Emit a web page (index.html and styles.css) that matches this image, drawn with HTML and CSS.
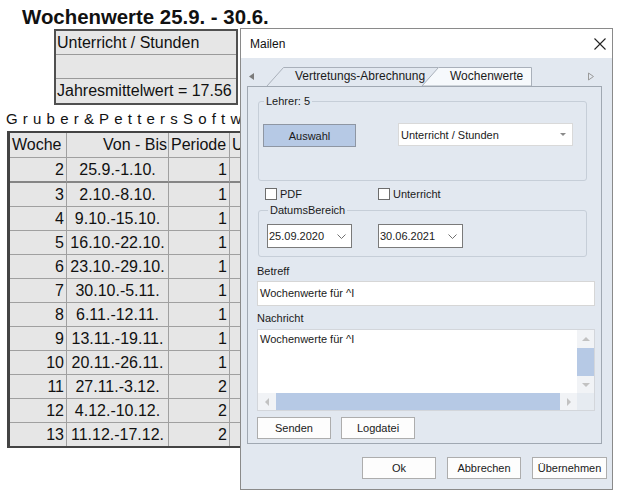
FILE: index.html
```html
<!DOCTYPE html>
<html lang="de">
<head>
<meta charset="utf-8">
<title>Wochenwerte</title>
<link rel="stylesheet" href="styles.css">
</head>
<body>
<div class="report">
  <h1 class="title">Wochenwerte 25.9. - 30.6.</h1>
  <div class="summary">
    <div class="summary-row">Unterricht / Stunden</div>
    <div class="summary-row"></div>
    <div class="summary-row">Jahresmittelwert = 17.56</div>
  </div>
  <div class="brand">Gruber&amp;PettersSoftware</div>
  <table class="weeks">
    <thead>
      <tr>
        <th class="c-week">Woche</th>
        <th class="c-range">Von - Bis</th>
        <th class="c-period">Periode</th>
        <th class="c-hours">U</th>
      </tr>
    </thead>
    <tbody>
      <tr class="first"><td class="num">2</td><td class="range">25.9.-1.10.</td><td class="num">1</td><td></td></tr>
      <tr><td class="num">3</td><td class="range">2.10.-8.10.</td><td class="num">1</td><td></td></tr>
      <tr><td class="num">4</td><td class="range">9.10.-15.10.</td><td class="num">1</td><td></td></tr>
      <tr><td class="num">5</td><td class="range">16.10.-22.10.</td><td class="num">1</td><td></td></tr>
      <tr><td class="num">6</td><td class="range">23.10.-29.10.</td><td class="num">1</td><td></td></tr>
      <tr><td class="num">7</td><td class="range">30.10.-5.11.</td><td class="num">1</td><td></td></tr>
      <tr><td class="num">8</td><td class="range">6.11.-12.11.</td><td class="num">1</td><td></td></tr>
      <tr><td class="num">9</td><td class="range">13.11.-19.11.</td><td class="num">1</td><td></td></tr>
      <tr><td class="num">10</td><td class="range">20.11.-26.11.</td><td class="num">1</td><td></td></tr>
      <tr><td class="num">11</td><td class="range">27.11.-3.12.</td><td class="num">2</td><td></td></tr>
      <tr><td class="num">12</td><td class="range">4.12.-10.12.</td><td class="num">2</td><td></td></tr>
      <tr><td class="num">13</td><td class="range">11.12.-17.12.</td><td class="num">2</td><td></td></tr>
    </tbody>
  </table>
</div>

<div class="dialog">
  <div class="titlebar">
    <span>Mailen</span>
    <svg class="close" width="12" height="12" viewBox="0 0 12 12"><path d="M0.5 0.5L11.5 11.5M11.5 0.5L0.5 11.5" stroke="#222" stroke-width="1.1" fill="none"/></svg>
  </div>
  <div class="tabs">
    <svg class="tab-shapes" width="371" height="28" viewBox="0 0 371 28">
      <polygon points="8,18.5 13,15 13,22" fill="#7b7b7b"/>
      <polygon points="347.5,15 352.5,18.5 347.5,22" fill="none" stroke="#9a9a9a"/>
      <path d="M26 28 L42.5 9.5 L197 9.5" fill="#e2e8f0" stroke="#a9b0ba"/>
      <path d="M181 28 L197.5 9.5 L290.5 9.5 L290.5 28 Z" fill="#f6f9fc" stroke="#a9b0ba"/>
    </svg>
    <div class="tab-labels">
      <span class="tab tab-first">Vertretungs-Abrechnung</span>
      <span class="tab">Wochenwerte</span>
    </div>
  </div>
  <div class="panel">
    <fieldset class="group group-teacher">
      <legend>Lehrer: 5</legend>
      <div class="teacher-row">
        <div class="btn btn-select">Auswahl</div>
        <div class="combo"><span>Unterricht / Stunden</span><span class="combo-arrow"></span></div>
      </div>
    </fieldset>
    <div class="checks">
      <label class="check check-first"><span class="box"></span>PDF</label>
      <label class="check"><span class="box"></span>Unterricht</label>
    </div>
    <fieldset class="group group-dates">
      <legend>DatumsBereich</legend>
      <div class="dates">
        <div class="date"><span>25.09.2020</span><svg width="9" height="5" viewBox="0 0 9 5"><path d="M0.5 0.5L4.5 4.5L8.5 0.5" fill="none" stroke="#707070"/></svg></div>
        <div class="date"><span>30.06.2021</span><svg width="9" height="5" viewBox="0 0 9 5"><path d="M0.5 0.5L4.5 4.5L8.5 0.5" fill="none" stroke="#707070"/></svg></div>
      </div>
    </fieldset>
    <div class="field-label label-subject">Betreff</div>
    <div class="input">Wochenwerte für ^I</div>
    <div class="field-label label-message">Nachricht</div>
    <div class="textarea">
      <div class="ta-text">Wochenwerte für ^I</div>
      <div class="vscroll">
        <div class="sb-btn"><span class="tri tri-up"></span></div>
        <div class="sb-thumb"></div>
        <div class="sb-btn"><span class="tri tri-down"></span></div>
      </div>
      <div class="hscroll">
        <div class="sb-btn"><span class="tri tri-left"></span></div>
        <div class="sb-thumb"></div>
        <div class="sb-btn"><span class="tri tri-right"></span></div>
      </div>
      <div class="corner"></div>
    </div>
    <div class="panel-buttons">
      <div class="btn">Senden</div>
      <div class="btn">Logdatei</div>
    </div>
  </div>
  <div class="footer">
    <div class="btn">Ok</div>
    <div class="btn">Abbrechen</div>
    <div class="btn btn-wide">Übernehmen</div>
  </div>
</div>
</body>
</html>
```

FILE: styles.css
```css
* { box-sizing: border-box; }

body {
  margin: 0;
  width: 618px;
  height: 491px;
  position: relative;
  overflow: hidden;
  background: #ffffff;
  font-family: "Liberation Sans", Arial, sans-serif;
  color: #111111;
}

/* ---------- report behind the dialog ---------- */
.report { padding-top: 6px; }

.title {
  margin: 0 0 0 22px;
  font-size: 20.4px;
  line-height: 23px;
  font-weight: bold;
}

.summary {
  margin-left: 54px;
  width: 184px;
  border: 2px solid #505050;
  background: #e6e6e6;
}

.summary-row {
  height: 24px;
  line-height: 23px;
  font-size: 16px;
  padding-left: 1px;
  border-bottom: 1px solid #9a9a9a;
  white-space: nowrap;
  overflow: hidden;
}
.summary-row:last-child { border-bottom: 0; }

.brand {
  margin: 5px 0 0 6px;
  font-size: 15px;
  line-height: 17px;
  letter-spacing: 5.2px;
  white-space: nowrap;
}

.weeks {
  margin: 4px 0 0 7px;
  width: 245px;
  table-layout: fixed;
  border-collapse: separate;
  border-spacing: 0;
  border: 2px solid #444444;
  border-left-width: 3px;
  background: #e6e6e6;
  font-size: 16px;
}

.weeks th,
.weeks td {
  padding: 0 2px;
  line-height: 23px;
  font-weight: normal;
  border-right: 1px solid #a0a0a0;
  border-bottom: 1px solid #a0a0a0;
  white-space: nowrap;
  overflow: hidden;
}
.weeks th { line-height: 24px; text-align: left; }
.weeks tr.first td { border-bottom: 2px solid #858585; }
.weeks tbody tr:last-child td { border-bottom: 0; }

.c-week { width: 57px; }
.c-range { width: 102px; }
.weeks th.c-range { text-align: right; padding-right: 1px; }
.c-period { width: 61px; }
.c-hours { width: 20px; }

.weeks td.num { text-align: right; }
.weeks td.range { text-align: center; padding: 0; }

/* ---------- dialog ---------- */
.dialog {
  position: absolute;
  left: 240px;
  top: 28px;
  width: 373px;
  height: 462px;
  border: 1px solid #8a8a8a;
  background: #e2e8f0;
  font-size: 11px;
  color: #1a1a1a;
}

.titlebar {
  height: 29px;
  background: #ffffff;
  display: flex;
  align-items: center;
  justify-content: space-between;
  padding: 0 6px 0 9px;
  font-size: 12px;
  color: #111111;
}
.close { display: block; }

.tabs {
  position: relative;
  height: 28px;
}
.tab-shapes { position: absolute; left: 0; top: 0; }
.tab-labels {
  position: relative;
  display: flex;
  padding: 11px 0 0 54px;
  font-size: 12px;
  line-height: 14px;
  white-space: nowrap;
}
.tab-first { width: 155px; }

.panel {
  margin-left: 6px;
  width: 355px;
  border: 1px solid #a0a8b2;
  padding: 0 0 4px 9px;
}

.group {
  margin: 8px 0 0 1px;
  width: 329px;
  border: 1px solid #c6ced8;
  border-radius: 3px;
  min-width: 0;
}
.group legend {
  margin-left: 1px;
  padding: 0 2px;
  line-height: 13px;
}
.group-teacher { padding: 16px 0 33px 4px; }
.group-dates { margin-top: 4px; padding: 7px 0 8px 8px; }

.teacher-row { display: flex; align-items: flex-start; }

.btn {
  height: 22px;
  width: 74px;
  display: flex;
  align-items: center;
  justify-content: center;
  background: #fdfdfd;
  border: 1px solid #adadad;
  white-space: nowrap;
}
.btn-wide { width: 75px; }

.btn-select {
  width: 93px;
  height: 23px;
  background: #b6c9e5;
  border-color: #8e96a3;
}

.combo {
  margin: -1px 0 0 42px;
  width: 175px;
  height: 23px;
  background: #ffffff;
  border: 1px solid #d9d9d9;
  display: flex;
  align-items: center;
  justify-content: space-between;
  padding: 0 6px 0 2px;
}
.combo-arrow {
  width: 0;
  height: 0;
  border-left: 3px solid transparent;
  border-right: 3px solid transparent;
  border-top: 3px solid #8a8a8a;
}

.checks {
  display: flex;
  margin-top: 7px;
  padding-left: 8px;
  height: 12px;
  line-height: 12px;
}
.check { display: flex; align-items: center; }
.check-first { width: 113px; }
.box {
  width: 12px;
  height: 12px;
  border: 1px solid #6d6d6d;
  background: #ffffff;
  margin-right: 3px;
}

.dates { display: flex; gap: 26px; }
.date {
  width: 85px;
  height: 24px;
  background: #ffffff;
  border: 1px solid #7a7a7a;
  display: flex;
  align-items: center;
  justify-content: space-between;
  padding: 0 5px 0 1px;
}
.date svg { display: block; }

.field-label { line-height: 13px; }
.label-subject { margin-top: 8px; }
.label-message { margin-top: 6px; }

.input {
  margin-top: 3px;
  width: 338px;
  height: 25px;
  line-height: 23px;
  padding-left: 2px;
  background: #ffffff;
  border: 1px solid #d6d6d6;
}

.textarea {
  margin-top: 4px;
  width: 338px;
  height: 82px;
  border: 1px solid #d3d6db;
  background: #ffffff;
  display: grid;
  grid-template-columns: 1fr 17px;
  grid-template-rows: 1fr 17px;
}
.ta-text { padding: 3px 0 0 2px; line-height: 13px; }

.vscroll {
  background: #f1f3f6;
  display: flex;
  flex-direction: column;
}
.hscroll {
  background: #f1f3f6;
  display: flex;
}
.vscroll .sb-btn { height: 17px; }
.hscroll .sb-btn { width: 17px; }
.sb-btn {
  display: flex;
  align-items: center;
  justify-content: center;
}
.sb-thumb { flex: 1; background: #b6c9e5; }
.vscroll .sb-thumb { margin: 1px 0 0; }
.hscroll .sb-thumb { margin: 0 0 0 1px; }
.corner { background: #e6ebf1; }

.tri { width: 0; height: 0; }
.tri-up { border-left: 4px solid transparent; border-right: 4px solid transparent; border-bottom: 4px solid #c2c2c2; }
.tri-down { border-left: 4px solid transparent; border-right: 4px solid transparent; border-top: 4px solid #c2c2c2; }
.tri-left { border-top: 4px solid transparent; border-bottom: 4px solid transparent; border-right: 4px solid #c2c2c2; }
.tri-right { border-top: 4px solid transparent; border-bottom: 4px solid transparent; border-left: 4px solid #c2c2c2; }

.panel-buttons {
  display: flex;
  gap: 10px;
  margin-top: 6px;
}

.footer {
  display: flex;
  justify-content: flex-end;
  gap: 11px;
  margin-top: 13px;
  padding-right: 5px;
}
```
